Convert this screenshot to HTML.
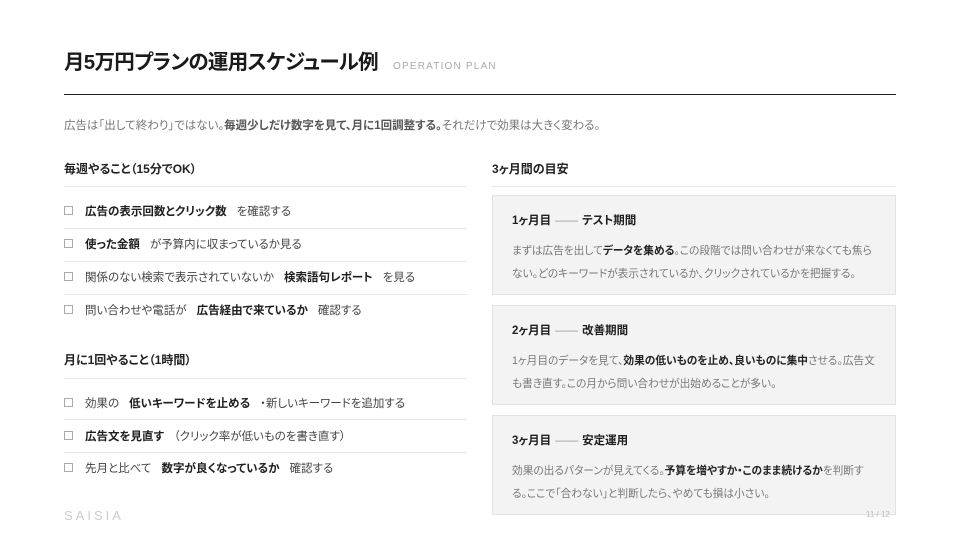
<!DOCTYPE html>
<html><head><meta charset="utf-8"><style>
*{margin:0;padding:0;box-sizing:border-box}
body{width:960px;height:540px;background:#fff;position:relative;overflow:hidden;font-family:"Liberation Sans","Noto Sans CJK JP",sans-serif;color:#444;font-feature-settings:"palt"}
.abs{position:absolute}
h1{position:absolute;left:64px;top:49px;font-size:20.5px;font-weight:700;color:#1a1a1a;letter-spacing:-0.7px;line-height:28px;white-space:nowrap}
.en{position:absolute;left:393px;top:61px;font-size:10px;letter-spacing:1.2px;color:#aaa}
.rule{position:absolute;left:64px;top:94px;width:832px;height:1px;background:#222}
.lead{position:absolute;left:64px;top:118px;font-size:11.5px;color:#777;line-height:16px;white-space:nowrap}
.lead b{color:#555}
.hd{position:absolute;font-size:12px;font-weight:700;color:#222;line-height:16px}
.ln{position:absolute;height:1px;background:#e8e8e8}
.it{position:absolute;left:64px;font-size:11.5px;line-height:16px;color:#444;white-space:nowrap}
.it b{color:#1e1e1e;margin:0 10px}
.cb{display:inline-block;width:9px;height:9px;border:1px solid #aaa;margin-right:12px;vertical-align:-0px}
.box{position:absolute;left:492px;width:404px;height:100px;background:#f3f3f3;border:1px solid #e3e3e3}
.bt{position:absolute;left:19px;top:17px;font-size:11.5px;font-weight:700;color:#1e1e1e;line-height:16px}
.bt span{font-weight:400;color:#999;margin:0 4px}
.bb{position:absolute;left:19px;top:44px;width:373px;font-size:10.7px;line-height:23px;color:#777}
.bb b{color:#222}
</style></head><body>
<h1>月5万円プランの運用スケジュール例</h1>
<div class="en">OPERATION PLAN</div>
<div class="rule"></div>
<div class="lead">広告は「出して終わり」ではない。<b>毎週少しだけ数字を見て、月に1回調整する。</b>それだけで効果は大きく変わる。</div>

<div class="hd" style="left:64px;top:161px">毎週やること（15分でOK）</div>
<div class="ln" style="left:64px;top:186px;width:403px"></div>
<div class="it" style="top:204px"><span class="cb"></span><b style="margin-left:0">広告の表示回数とクリック数</b>を確認する</div>
<div class="ln" style="left:64px;top:228px;width:403px"></div>
<div class="it" style="top:237px"><span class="cb"></span><b style="margin-left:0">使った金額</b>が予算内に収まっているか見る</div>
<div class="ln" style="left:64px;top:261px;width:403px"></div>
<div class="it" style="top:270px"><span class="cb"></span>関係のない検索で表示されていないか<b>検索語句レポート</b>を見る</div>
<div class="ln" style="left:64px;top:294px;width:403px"></div>
<div class="it" style="top:303px"><span class="cb"></span>問い合わせや電話が<b>広告経由で来ているか</b>確認する</div>

<div class="hd" style="left:64px;top:352px">月に1回やること（1時間）</div>
<div class="ln" style="left:64px;top:378px;width:403px"></div>
<div class="it" style="top:396px"><span class="cb"></span>効果の<b>低いキーワードを止める</b>・新しいキーワードを追加する</div>
<div class="ln" style="left:64px;top:419px;width:403px"></div>
<div class="it" style="top:429px"><span class="cb"></span><b style="margin-left:0">広告文を見直す</b>（クリック率が低いものを書き直す）</div>
<div class="ln" style="left:64px;top:452px;width:403px"></div>
<div class="it" style="top:461px"><span class="cb"></span>先月と比べて<b>数字が良くなっているか</b>確認する</div>

<div class="hd" style="left:492px;top:161px">3ヶ月間の目安</div>
<div class="ln" style="left:492px;top:186px;width:404px"></div>

<div class="box" style="top:195px"><div class="bt">1ヶ月目<span>——</span>テスト期間</div><div class="bb">まずは広告を出して<b>データを集める</b>。この段階では問い合わせが来なくても焦ら<br>ない。どのキーワードが表示されているか、クリックされているかを把握する。</div></div>
<div class="box" style="top:305px"><div class="bt">2ヶ月目<span>——</span>改善期間</div><div class="bb">1ヶ月目のデータを見て、<b>効果の低いものを止め、良いものに集中</b>させる。広告文<br>も書き直す。この月から問い合わせが出始めることが多い。</div></div>
<div class="box" style="top:415px"><div class="bt">3ヶ月目<span>——</span>安定運用</div><div class="bb">効果の出るパターンが見えてくる。<b>予算を増やすか・このまま続けるか</b>を判断す<br>る。ここで「合わない」と判断したら、やめても損は小さい。</div></div>

<div class="abs" style="left:64px;top:508px;font-size:13px;letter-spacing:3px;color:#ccc">SAISIA</div>
<div class="abs" style="left:866px;top:510px;font-size:8px;color:#bbb">11 / 12</div>
</body></html>
